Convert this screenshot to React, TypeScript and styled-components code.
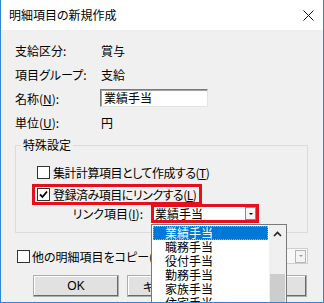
import React from 'react';
import styled, { createGlobalStyle } from 'styled-components';

const GlobalStyle = createGlobalStyle`
  html, body {
    margin: 0;
    padding: 0;
    background: #fff;
  }
  body {
    font-family: "Noto Sans CJK JP", "Noto Sans", sans-serif;
    font-size: 12px;
    color: #000;
    font-feature-settings: "palt";
  }
`;

const RED = '#e5101b';

const Window = styled.div`
  position: relative;
  width: 324px;
  height: 303px;
  box-sizing: border-box;
  border: 1px solid #2f86d6;
  border-top: none;
  display: flex;
  flex-direction: column;
  overflow: hidden;
`;

const TitleBar = styled.div`
  height: 30px;
  flex: none;
  background: #fff;
  display: flex;
  align-items: center;
  justify-content: space-between;
  padding: 0 9px 0 8px;
`;

const Title = styled.span`
  line-height: 16px;
`;

const Body = styled.div`
  flex: 1;
  background: #f0f0f0;
  padding: 8px 15px 0 14px;
`;

const InfoRow = styled.div`
  height: 24px;
  display: flex;
  align-items: center;
`;

const Label = styled.span`
  width: 86px;
  flex: none;
`;

const TextInput = styled.div`
  width: 108px;
  height: 18px;
  box-sizing: border-box;
  margin-left: -1px;
  background: #fff;
  border: 1px solid;
  border-color: #7a7a7a #e3e3e3 #e3e3e3 #7a7a7a;
  box-shadow: inset 1px 1px 0 #a0a0a0;
  padding-left: 3px;
  line-height: 16px;
`;

const Group = styled.fieldset`
  margin: 3px 0 0;
  padding: 0 0 9px;
  border: 1px solid #dcdcdc;
  min-width: 0;
`;

const Legend = styled.legend`
  margin-left: 5px;
  padding: 0 2px;
  line-height: 16px;
`;

const GroupBody = styled.div`
  padding: 9px 0 0 16px;
  display: flex;
  flex-direction: column;
  align-items: flex-start;
`;

const CheckRow = styled.label<{ $marked?: boolean }>`
  height: 21px;
  box-sizing: border-box;
  display: inline-flex;
  align-items: center;
  gap: 3px;
  padding: 0 3px 0 2px;
  border: 3px solid ${p => (p.$marked ? RED : 'transparent')};
  margin-top: ${p => (p.$marked ? '1px' : '0')};
  letter-spacing: -0.5px;
`;

const Box = styled.span`
  width: 13px;
  height: 13px;
  box-sizing: border-box;
  border: 1px solid #333;
  background: #fff;
  flex: none;
  display: flex;
  align-items: center;
  justify-content: center;
`;

const LinkRow = styled.div`
  display: flex;
  align-items: center;
  height: 19px;
  margin-top: -1px;
  padding-left: 16px;
`;

const LinkLabel = styled.span`
  width: 111px;
  text-align: right;
  margin-right: 8px;
`;

const Combo = styled.div`
  position: relative;
  width: 108px;
  height: 19px;
  box-sizing: border-box;
  border: 3px solid ${RED};
  background: #fff;
  display: flex;
  align-items: center;
  justify-content: space-between;
  padding-left: 1px;
`;

const ComboText = styled.span`
  line-height: 13px;
`;

const MiniButton = styled.span<{ $faded?: boolean }>`
  width: 11px;
  height: 13px;
  box-sizing: border-box;
  border: 1px solid ${p => (p.$faded ? '#b5b5b5' : '#8a8a8a')};
  background: #f4f4f4;
  display: flex;
  align-items: center;
  justify-content: center;
  &::after {
    content: '';
    border-left: 2px solid transparent;
    border-right: 2px solid transparent;
    border-top: 2px solid ${p => (p.$faded ? '#9a9a9a' : '#000')};
  }
`;

const DropList = styled.div`
  position: absolute;
  top: calc(100% + 4px);
  left: -3px;
  width: 136px;
  height: 100px;
  box-sizing: border-box;
  border: 1px solid #7a7a7a;
  background: #fff;
  display: flex;
  z-index: 2;
`;

const Items = styled.div`
  flex: 1;
  padding: 1px;
`;

const Item = styled.div<{ $selected?: boolean }>`
  height: 14px;
  line-height: 14px;
  padding-left: 12px;
  box-sizing: border-box;
  color: ${p => (p.$selected ? '#fff' : '#000')};
  background: ${p => (p.$selected ? '#0078d7' : 'transparent')};
  outline: ${p => (p.$selected ? '1px dotted #7fb6e8' : 'none')};
  outline-offset: -1px;
`;

const ScrollBar = styled.div`
  width: 17px;
  flex: none;
  background: #f0f0f0;
  display: flex;
  flex-direction: column;
  align-items: center;
`;

const ScrollArrow = styled.div`
  height: 17px;
  display: flex;
  align-items: center;
  justify-content: center;
`;

const Thumb = styled.div`
  width: 15px;
  margin-top: 32px;
  flex: 1;
  background: #cdcdcd;
`;

const CopyRow = styled.div`
  height: 18px;
  margin-top: 14px;
  display: flex;
  align-items: center;
  gap: 2px;
  padding-left: 2px;
`;

const DisabledCombo = styled.div`
  margin-left: auto;
  width: 118px;
  height: 16px;
  box-sizing: border-box;
  border: 1px solid #cfcfcf;
  background: #f7f7f7;
  display: flex;
  justify-content: flex-end;
  align-items: center;
  padding-right: 1px;
`;

const ButtonRow = styled.div`
  margin-top: 10px;
  padding-left: 18px;
  display: flex;
  gap: 8px;
`;

const Button = styled.div`
  width: 86px;
  height: 22px;
  box-sizing: border-box;
  background: #e1e1e1;
  border: 1px solid #adadad;
  box-shadow: inset -1px -1px 0 #6a6a6a, inset 1px 1px 0 #fff;
  display: flex;
  align-items: center;
  justify-content: center;
  font-family: "Liberation Sans", "Noto Sans CJK JP", sans-serif;
`;

const items = ['業績手当', '職務手当', '役付手当', '勤務手当', '家族手当', '住宅手当', '通勤手当'];

const Check = () => (
  <svg width="9" height="9" viewBox="0 0 9 9">
    <polyline points="1,4.5 3.5,7 8,1.5" fill="none" stroke="#000" strokeWidth="1.8" />
  </svg>
);

export default function App() {
  return (
    <>
      <GlobalStyle />
      <Window>
        <TitleBar>
          <Title>明細項目の新規作成</Title>
          <svg width="11" height="11" viewBox="0 0 11 11">
            <path d="M0.5 0.5 L10.5 10.5 M10.5 0.5 L0.5 10.5" stroke="#111" strokeWidth="1" />
          </svg>
        </TitleBar>
        <Body>
          <InfoRow>
            <Label>支給区分:</Label>
            <span>賞与</span>
          </InfoRow>
          <InfoRow>
            <Label>項目グループ:</Label>
            <span>支給</span>
          </InfoRow>
          <InfoRow>
            <Label>名称(<u>N</u>):</Label>
            <TextInput>業績手当</TextInput>
          </InfoRow>
          <InfoRow>
            <Label>単位(<u>U</u>):</Label>
            <span>円</span>
          </InfoRow>

          <Group>
            <Legend>特殊設定</Legend>
            <GroupBody>
              <CheckRow>
                <Box />
                <span>集計計算項目として作成する(<u>T</u>)</span>
              </CheckRow>
              <CheckRow $marked>
                <Box>
                  <Check />
                </Box>
                <span>登録済み項目にリンクする(<u>L</u>)</span>
              </CheckRow>
            </GroupBody>
            <LinkRow>
              <LinkLabel>リンク項目(<u>I</u>):</LinkLabel>
              <Combo>
                <ComboText>業績手当</ComboText>
                <MiniButton />
                <DropList>
                  <Items>
                    {items.map((name, i) => (
                      <Item key={name} $selected={i === 0}>
                        {name}
                      </Item>
                    ))}
                  </Items>
                  <ScrollBar>
                    <ScrollArrow>
                      <svg width="9" height="6" viewBox="0 0 9 6">
                        <polyline points="1,5 4.5,1.5 8,5" fill="none" stroke="#222" strokeWidth="1.6" />
                      </svg>
                    </ScrollArrow>
                    <Thumb />
                  </ScrollBar>
                </DropList>
              </Combo>
            </LinkRow>
          </Group>

          <CopyRow>
            <Box />
            <span>他の明細項目をコピー(<u>C</u>)</span>
            <DisabledCombo>
              <MiniButton $faded />
            </DisabledCombo>
          </CopyRow>

          <ButtonRow>
            <Button>OK</Button>
            <Button>キャンセル</Button>
            <Button>ヘルプ</Button>
          </ButtonRow>
        </Body>
      </Window>
    </>
  );
}
